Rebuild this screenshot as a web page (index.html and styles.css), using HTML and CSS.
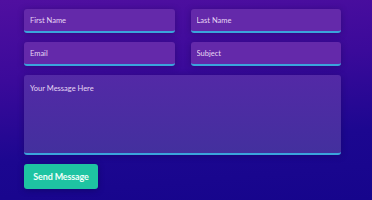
FILE: index.html
```html
<!DOCTYPE html>
<html lang="en">
<head>
  <meta charset="UTF-8" />
  <meta name="viewport" content="width=device-width, initial-scale=1.0"/>
  <title>Contact</title>
  <link rel="stylesheet" href="styles.css">
</head>
<body>
  <form class="contact">
    <div class="row">
      <input class="field" type="text" placeholder="First Name">
      <input class="field" type="text" placeholder="Last Name">
    </div>
    <div class="row">
      <input class="field" type="email" placeholder="Email">
      <input class="field" type="text" placeholder="Subject">
    </div>
    <textarea class="field message" placeholder="Your Message Here"></textarea>
    <button class="send" type="button">Send Message</button>
  </form>
</body>
</html>
```

FILE: styles.css
```css
html, body {
  height: 100%;
}
body {
  margin: 0;
  font-family: Lato, 'Open Sans', sans-serif;
  background: linear-gradient(175deg, #500fa0 0%, #3b0a9a 35%, #1c0790 70%, #16058c 100%);
  color: #fff;
}
.contact {
  width: 317px;
  padding: 9px 0 0 24px;
  display: flex;
  flex-direction: column;
  gap: 9px;
}
.row {
  display: flex;
  gap: 16px;
}
.field {
  flex: 1;
  min-width: 0;
  box-sizing: border-box;
  height: 24px;
  padding: 0 6px;
  border: none;
  border-bottom: 2px solid #3ba4dc;
  border-radius: 3px;
  background: #6429aa;
  box-shadow: 0 1px 6px rgba(20, 0, 70, 0.35);
  font-family: inherit;
  font-size: 7.5px;
  color: #fff;
  outline: none;
}
.field::placeholder {
  color: #e6d6f4;
}
.message {
  flex: none;
  height: 80px;
  padding: 9px 6px;
  resize: none;
  background: linear-gradient(180deg, #5329a6 0%, #43309e 100%);
}
.send {
  align-self: flex-start;
  width: 74px;
  height: 25px;
  border: none;
  border-radius: 3px;
  background: #1ec4a2;
  color: #eefffa;
  font-family: inherit;
  font-size: 9px;
  font-weight: bold;
  letter-spacing: -0.15px;
  box-shadow: 0 1px 6px rgba(10, 0, 60, 0.4);
}
```
